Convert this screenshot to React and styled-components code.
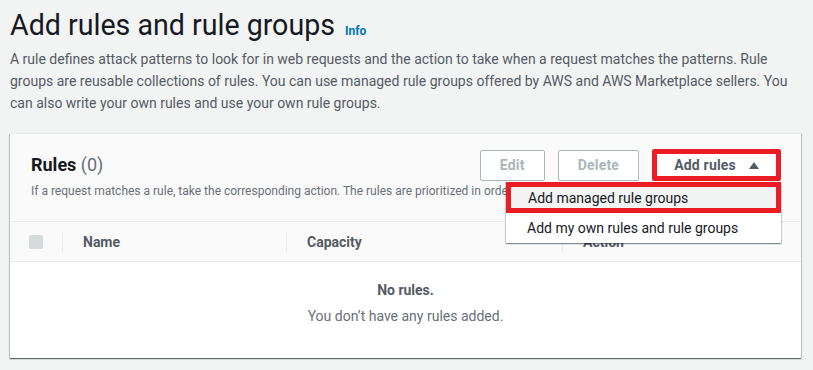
import React from 'react'
import styled, { createGlobalStyle } from 'styled-components'

const COLORS = {
  page: '#f2f3f3',
  text: '#16191f',
  body: '#545b64',
  muted: '#687078',
  link: '#0073bb',
  border: '#eaeded',
  btnBorder: '#aab7b8',
  disabled: '#aab7b8',
  highlight: '#ec1c24',
}

const FONT = `Roboto, "Liberation Sans", Arial, sans-serif`

const GlobalStyle = createGlobalStyle`
  body {
    margin: 0;
    background: ${COLORS.page};
    font-family: ${FONT};
    color: ${COLORS.text};
  }
`

const COLUMNS = ['Name', 'Capacity', 'Action']

const App = () => {
  return (
    <>
      <GlobalStyle />
      <Page>
        <TitleRow>
          <Title>Add rules and rule groups</Title>
          <InfoLink>Info</InfoLink>
        </TitleRow>
        <Intro>
          A rule defines attack patterns to look for in web requests and the action to take when a request matches the patterns. Rule
          groups are reusable collections of rules. You can use managed rule groups offered by AWS and AWS Marketplace sellers. You
          can also write your own rules and use your own rule groups.
        </Intro>

        <Card>
          <CardHeader>
            <HeaderTop>
              <CardTitle>Rules <Count>(0)</Count></CardTitle>
              <Actions>
                <Button disabled>Edit</Button>
                <Button disabled>Delete</Button>
                <MenuWrap>
                  <Button $marked>
                    Add rules
                    <Caret viewBox="0 0 10 7"><path d="M5 0 L10 7 L0 7 Z" /></Caret>
                  </Button>
                  <Menu>
                    <MenuItem $active>Add managed rule groups</MenuItem>
                    <MenuItem>Add my own rules and rule groups</MenuItem>
                  </Menu>
                </MenuWrap>
              </Actions>
            </HeaderTop>
            <CardDesc>
              If a request matches a rule, take the corresponding action. The rules are prioritized in order they appear.
            </CardDesc>
          </CardHeader>

          <HeadRow>
            <HeadCell>
              <Checkbox />
            </HeadCell>
            {COLUMNS.map((col) => (
              <HeadCell key={col} $divider>
                {col}
              </HeadCell>
            ))}
          </HeadRow>

          <Empty>
            <EmptyTitle>No rules.</EmptyTitle>
            <EmptyText>You don’t have any rules added.</EmptyText>
          </Empty>
        </Card>
      </Page>
    </>
  )
}

const Page = styled.div`
  padding: 5px 12px 13px 10px;
`

const TitleRow = styled.div`
  display: flex;
  align-items: baseline;
  gap: 10px;
`

const Title = styled.h1`
  margin: 0;
  font-size: 28.6px;
  line-height: 40px;
  font-weight: 400;
  color: ${COLORS.text};
`

const InfoLink = styled.a`
  font-size: 12px;
  font-weight: 700;
  color: ${COLORS.link};
  cursor: pointer;
`

const Intro = styled.p`
  margin: 3px 0 0;
  font-size: 14px;
  line-height: 22px;
  color: ${COLORS.body};
`

const Card = styled.section`
  margin-top: 19px;
  background: #fff;
  border-top: 1px solid ${COLORS.border};
  box-shadow: 0 1px 1px 0 rgba(0, 28, 36, 0.5), 1px 1px 1px 0 rgba(0, 28, 36, 0.15),
    -1px 1px 1px 0 rgba(0, 28, 36, 0.15);
`

const CardHeader = styled.div`
  background: #fafafa;
  padding: 15px 20px 22px 21px;
  border-bottom: 1px solid ${COLORS.border};
`

const HeaderTop = styled.div`
  display: flex;
  align-items: center;
  justify-content: space-between;
`

const CardTitle = styled.h2`
  margin: 0;
  font-size: 18px;
  line-height: 22px;
  font-weight: 700;
  color: ${COLORS.text};
`

const Count = styled.span`
  font-weight: 400;
  color: ${COLORS.muted};
`

const CardDesc = styled.p`
  margin: 2px 0 0;
  font-size: 12px;
  line-height: 16px;
  color: ${COLORS.muted};
`

const Actions = styled.div`
  display: flex;
  align-items: center;
  gap: 13px;
`

const Button = styled.button`
  display: flex;
  align-items: center;
  gap: 13px;
  height: ${(p) => (p.$marked ? '32px' : '31px')};
  padding: 0 ${(p) => (p.$marked ? '17px' : '19px')};
  background: #fff;
  border: ${(p) => (p.$marked ? `5px solid ${COLORS.highlight}` : `1px solid ${COLORS.btnBorder}`)};
  border-radius: 2px;
  font-family: ${FONT};
  font-size: 14px;
  font-weight: 700;
  letter-spacing: 0.2px;
  color: ${(p) => (p.disabled ? COLORS.disabled : COLORS.body)};
  cursor: ${(p) => (p.disabled ? 'default' : 'pointer')};
`

const Caret = styled.svg`
  width: 10px;
  height: 7px;
  fill: ${COLORS.body};
`

const MenuWrap = styled.div`
  position: relative;
`

const Menu = styled.ul`
  position: absolute;
  top: 100%;
  right: 0;
  width: 275px;
  margin: 1px 0 0;
  padding: 0;
  list-style: none;
  background: #fff;
  box-shadow: 0 1px 1px 0 rgba(0, 28, 36, 0.3), 1px 1px 1px 0 rgba(0, 28, 36, 0.15),
    -1px 1px 1px 0 rgba(0, 28, 36, 0.15);
  z-index: 2;
`

const MenuItem = styled.li`
  height: ${(p) => (p.$active ? '31px' : '30px')};
  display: flex;
  align-items: center;
  padding-left: ${(p) => (p.$active ? '17px' : '21px')};
  box-sizing: border-box;
  background: ${(p) => (p.$active ? COLORS.page : '#fff')};
  border: ${(p) => (p.$active ? `5px solid ${COLORS.highlight}` : 'none')};
  box-shadow: ${(p) => (p.$active ? `0 1px 0 0 ${COLORS.link}` : 'none')};
  font-size: 14px;
  color: ${COLORS.text};
  cursor: pointer;
`

const HeadRow = styled.div`
  display: grid;
  grid-template-columns: 52px 224px 276px 1fr;
  align-items: center;
  height: 39px;
  background: #fafafa;
  border-bottom: 1px solid ${COLORS.border};
`

const HeadCell = styled.div`
  display: flex;
  align-items: center;
  height: 20px;
  padding-left: ${(p) => (p.$divider ? '20px' : '19px')};
  border-left: ${(p) => (p.$divider ? `1px solid ${COLORS.border}` : 'none')};
  font-size: 14px;
  font-weight: 700;
  color: ${COLORS.body};
`

const Checkbox = styled.span`
  width: 14px;
  height: 14px;
  border-radius: 2px;
  background: #d5dbdb;
`

const Empty = styled.div`
  padding: 18px 0 32px;
  text-align: center;
`

const EmptyTitle = styled.div`
  font-size: 14px;
  line-height: 20px;
  font-weight: 700;
  color: ${COLORS.body};
`

const EmptyText = styled.div`
  margin-top: 6px;
  font-size: 14px;
  line-height: 20px;
  color: ${COLORS.muted};
`

export default App
